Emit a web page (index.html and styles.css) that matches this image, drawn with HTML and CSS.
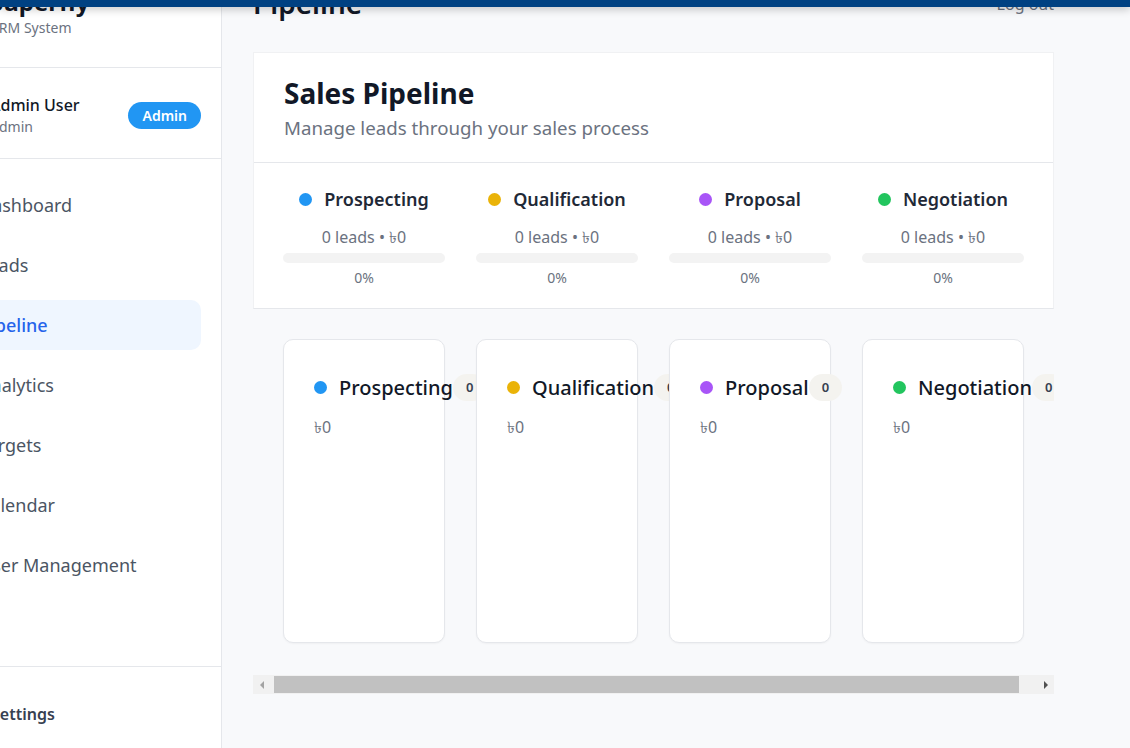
FILE: index.html
```html
<!DOCTYPE html>
<html lang="en">
<head>
<meta charset="utf-8">
<title>Pipeline</title>
<link rel="stylesheet" href="styles.css">
</head>
<body>
<div class="topbar"></div>
<div class="app">
  <aside class="sidebar">
    <div class="brand">
      <div class="brand-name">Superfly</div>
      <div class="brand-sub">CRM System</div>
    </div>
    <div class="user">
      <div class="user-info">
        <div class="user-name">Admin User</div>
        <div class="user-role">Admin</div>
      </div>
      <span class="role-badge">Admin</span>
    </div>
    <nav class="nav">
      <a class="nav-item">Dashboard</a>
      <a class="nav-item">Leads</a>
      <a class="nav-item active">Pipeline</a>
      <a class="nav-item">Analytics</a>
      <a class="nav-item">Targets</a>
      <a class="nav-item">Calendar</a>
      <a class="nav-item">User Management</a>
    </nav>
    <div class="sidebar-footer">
      <a class="nav-item settings">Settings</a>
    </div>
  </aside>
  <main class="main">
    <header class="page-header">
      <h1 class="page-title">Pipeline</h1>
      <span class="logout">Log out</span>
    </header>
    <section class="panel">
      <div class="panel-head">
        <h2 class="panel-title">Sales Pipeline</h2>
        <p class="panel-sub">Manage leads through your sales process</p>
      </div>
      <div class="summary">
        <div class="stat">
          <div class="stat-label"><span class="dot blue"></span>Prospecting</div>
          <div class="stat-meta">0 leads • ৳0</div>
          <div class="bar"><div class="bar-fill" style="width:0%"></div></div>
          <div class="stat-pct">0%</div>
        </div>
        <div class="stat">
          <div class="stat-label"><span class="dot yellow"></span>Qualification</div>
          <div class="stat-meta">0 leads • ৳0</div>
          <div class="bar"><div class="bar-fill" style="width:0%"></div></div>
          <div class="stat-pct">0%</div>
        </div>
        <div class="stat">
          <div class="stat-label"><span class="dot purple"></span>Proposal</div>
          <div class="stat-meta">0 leads • ৳0</div>
          <div class="bar"><div class="bar-fill" style="width:0%"></div></div>
          <div class="stat-pct">0%</div>
        </div>
        <div class="stat">
          <div class="stat-label"><span class="dot green"></span>Negotiation</div>
          <div class="stat-meta">0 leads • ৳0</div>
          <div class="bar"><div class="bar-fill" style="width:0%"></div></div>
          <div class="stat-pct">0%</div>
        </div>
      </div>
    </section>
    <div class="board">
      <div class="column">
        <div class="col-head"><div class="col-name"><span class="dot blue"></span>Prospecting</div><span class="count">0</span></div>
        <div class="col-amount">৳0</div>
      </div>
      <div class="column">
        <div class="col-head"><div class="col-name"><span class="dot yellow"></span>Qualification</div><span class="count">0</span></div>
        <div class="col-amount">৳0</div>
      </div>
      <div class="column">
        <div class="col-head"><div class="col-name"><span class="dot purple"></span>Proposal</div><span class="count">0</span></div>
        <div class="col-amount">৳0</div>
      </div>
      <div class="column">
        <div class="col-head"><div class="col-name"><span class="dot green"></span>Negotiation</div><span class="count">0</span></div>
        <div class="col-amount">৳0</div>
      </div>
    </div>
    <div class="hscroll">
      <span class="sb-btn"><span class="tri-left"></span></span>
      <span class="sb-thumb"></span>
      <span class="sb-btn"><span class="tri-right"></span></span>
    </div>
  </main>
</div>
</body>
</html>
```
FILE: styles.css
```css
* { box-sizing: border-box; }
html, body { margin: 0; padding: 0; }
body {
  font-family: "Noto Sans", "Open Sans", "DejaVu Sans", sans-serif;
  color: #111827;
  background: #f8f9fb;
  overflow: hidden;
}
.topbar {
  position: fixed;
  top: 0; left: 0; right: 0;
  height: 7px;
  background: #004182;
  box-shadow: 0 2px 8px rgba(0,0,0,0.25);
  z-index: 10;
}
.app {
  display: flex;
  margin-left: -60px;
  margin-top: -38px;
  height: calc(100vh + 38px);
}
.sidebar {
  width: 282px;
  flex: none;
  background: #fff;
  border-right: 1px solid #e5e7eb;
  display: flex;
  flex-direction: column;
}
.brand {
  padding: 24px 20px 29px 50px;
  border-bottom: 1px solid #e5e7eb;
}
.brand-name {
  font-size: 24px;
  line-height: 32px;
  font-weight: 700;
  color: #111827;
}
.brand-sub {
  font-size: 14px;
  line-height: 20px;
  color: #6b7280;
}
.user {
  display: flex;
  align-items: center;
  justify-content: space-between;
  padding: 25px 20px 21px 50px;
  border-bottom: 1px solid #e5e7eb;
}
.user-name {
  font-size: 16px;
  line-height: 24px;
  font-weight: 500;
  color: #111827;
}
.user-role {
  font-size: 14px;
  line-height: 20px;
  color: #6b7280;
}
.role-badge {
  background: #2196f3;
  color: #fff;
  font-size: 14px;
  font-weight: 600;
  line-height: 19px;
  padding: 4px 14px;
  border-radius: 999px;
}
.nav {
  flex: 1;
  display: flex;
  flex-direction: column;
  gap: 10px;
  padding: 21px 20px 20px 23px;
}
.nav-item {
  display: flex;
  align-items: center;
  height: 50px;
  padding-left: 16px;
  border-radius: 10px;
  font-size: 18px;
  color: #4b5563;
}
.nav-item.active {
  background: #eff6ff;
  color: #2563eb;
  font-weight: 500;
}
.sidebar-footer {
  border-top: 1px solid #e5e7eb;
  padding: 22px 20px 9px 35px;
}
.nav-item.settings {
  padding-left: 16px;
  font-size: 16px;
  font-weight: 600;
  color: #374151;
}
.main {
  flex: 1;
  min-width: 0;
  padding: 20px 76px 0 31px;
}
.page-header {
  display: flex;
  align-items: center;
  justify-content: space-between;
  margin-bottom: 34px;
}
.page-title {
  margin: 0;
  padding-top: 3px;
  height: 36px;
  font-size: 28px;
  line-height: 36px;
  font-weight: 600;
  color: #111827;
}
.logout {
  font-size: 16px;
  color: #6b7280;
  margin-top: 8px;
}
.panel {
  background: #fff;
  border: 1px solid #f0f1f3;
  border-bottom-color: #e5e7eb;
}
.panel-head {
  padding: 22px 30px 21px;
  border-bottom: 1px solid #e5e7eb;
}
.panel-title {
  margin: 0;
  font-size: 28px;
  line-height: 36px;
  font-weight: 700;
  color: #111827;
}
.panel-sub {
  margin: 4px 0 0;
  font-size: 18.7px;
  line-height: 26px;
  color: #6b7280;
}
.summary {
  display: flex;
  gap: 31px;
  padding: 24px 29px 21px;
}
.stat {
  width: 162px;
  flex: none;
  display: flex;
  flex-direction: column;
  align-items: center;
}
.stat-label {
  display: flex;
  align-items: center;
  gap: 12px;
  font-size: 18px;
  line-height: 24px;
  font-weight: 600;
  color: #1f2937;
  white-space: nowrap;
}
.dot {
  width: 13px;
  height: 13px;
  border-radius: 50%;
  flex: none;
}
.dot.blue { background: #2196f3; }
.dot.yellow { background: #eab308; }
.dot.purple { background: #a855f7; }
.dot.green { background: #22c55e; }
.stat-meta {
  margin-top: 14px;
  font-size: 16px;
  line-height: 24px;
  color: #6b7280;
}
.bar {
  margin-top: 4px;
  width: 100%;
  height: 10px;
  border-radius: 5px;
  background: #f3f3f3;
  overflow: hidden;
}
.bar-fill { height: 100%; background: #2196f3; }
.stat-pct {
  margin-top: 6px;
  font-size: 14px;
  line-height: 18px;
  color: #6b7280;
}
.board {
  display: flex;
  gap: 31px;
  padding: 30px 30px 32px;
  overflow: hidden;
}
.column {
  width: 162px;
  height: 304px;
  flex: none;
  background: #fff;
  border: 1px solid #e5e7eb;
  border-radius: 10px;
  box-shadow: 0 1px 2px rgba(0,0,0,0.04);
  padding: 34px 30px 30px;
}
.col-head {
  display: flex;
  align-items: center;
  justify-content: space-between;
  height: 27px;
}
.col-name {
  display: flex;
  align-items: center;
  gap: 12px;
  font-size: 20px;
  line-height: 27px;
  font-weight: 500;
  color: #111827;
  white-space: nowrap;
}
.count {
  flex: none;
  background: #f4f3ef;
  color: #374151;
  font-size: 13px;
  font-weight: 600;
  line-height: 27px;
  padding: 0 13px;
  border-radius: 999px;
}
.col-amount {
  margin-top: 14px;
  font-size: 16px;
  line-height: 24px;
  color: #6b7280;
}
.hscroll {
  display: flex;
  align-items: center;
  height: 19px;
  background: #f1f1f1;
}
.sb-btn {
  width: 17px;
  height: 19px;
  flex: none;
  display: flex;
  align-items: center;
  justify-content: center;
}
.tri-left {
  width: 0; height: 0;
  border-top: 4px solid transparent;
  border-bottom: 4px solid transparent;
  border-right: 4px solid #a3a3a3;
}
.tri-right {
  width: 0; height: 0;
  border-top: 4px solid transparent;
  border-bottom: 4px solid transparent;
  border-left: 4px solid #505050;
}
.sb-thumb {
  flex: 1;
  height: 17px;
  margin: 0 18px 0 4px;
  background: #c1c1c1;
}
```
